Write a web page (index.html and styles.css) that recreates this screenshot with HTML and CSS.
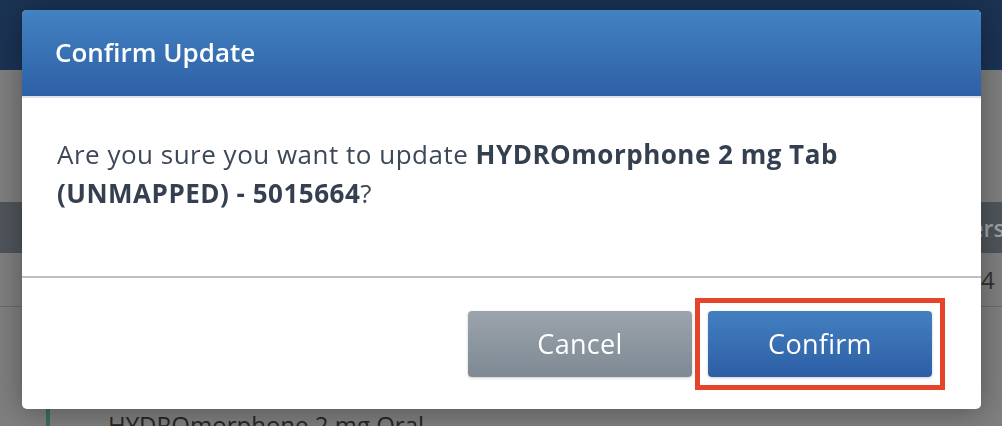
FILE: index.html
```html
<!DOCTYPE html>
<html lang="en">
<head>
<meta charset="utf-8">
<title>Confirm Update</title>
<link rel="stylesheet" href="styles.css">
</head>
<body>
<div class="page">
  <div class="topbar"></div>
  <div class="content">
    <div class="table">
      <div class="thead"><span class="th">Orders</span></div>
      <div class="trow"><span class="td">4</span></div>
    </div>
    <div class="item"><span class="item-bar"></span><span class="item-name">HYDROmorphone 2 mg Oral</span></div>
  </div>
</div>
<div class="overlay">
  <div class="modal">
    <div class="modal-header"><h1 class="modal-title">Confirm Update</h1></div>
    <div class="modal-body">
      <p class="message">Are you sure you want to update <b>HYDROmorphone 2 mg Tab</b><br><b>(UNMAPPED) - 5015664</b>?</p>
    </div>
    <div class="modal-footer">
      <button class="btn btn-cancel" type="button">Cancel</button>
      <div class="highlight"><button class="btn btn-confirm" type="button">Confirm</button></div>
    </div>
  </div>
</div>
</body>
</html>
```
FILE: styles.css
```css
html, body {
  margin: 0;
  padding: 0;
}
body {
  width: 1002px;
  height: 426px;
  overflow: hidden;
  background: #7f7f7f;
  font-family: "Open Sans", Lato, "Liberation Sans", sans-serif;
}
.page {
  display: flex;
  flex-direction: column;
  height: 426px;
}
.topbar {
  height: 70px;
  background: #1b3354;
  flex: none;
}
.content {
  flex: 1;
  display: flex;
  flex-direction: column;
}
.table {
  margin-top: 132px;
  display: flex;
  flex-direction: column;
}
.thead {
  height: 51px;
  background: #4f555b;
  display: flex;
  align-items: center;
  padding-left: 928px;
}
.th {
  font-size: 23px;
  font-weight: 600;
  color: #9ea2a6;
  white-space: nowrap;
}
.trow {
  height: 53px;
  border-bottom: 1px solid #6a6a6a;
  display: flex;
  align-items: center;
  padding-left: 981px;
}
.td {
  font-size: 24px;
  color: #333;
}
.item {
  margin-top: 101px;
  display: flex;
  align-items: flex-start;
  padding-left: 46px;
}
.item-bar {
  width: 4px;
  height: 40px;
  margin-top: -1px;
  background: #3c6e57;
}
.item-name {
  margin-left: 58px;
  font-size: 24px;
  line-height: 33px;
  color: #262626;
  white-space: nowrap;
}
.overlay {
  position: fixed;
  inset: 0;
}
.modal {
  position: absolute;
  left: 22px;
  top: 10px;
  width: 959px;
  height: 399px;
  background: #fff;
  border-radius: 5px;
  box-shadow: 0 2px 30px rgba(0, 0, 0, 0.35);
  display: flex;
  flex-direction: column;
  overflow: hidden;
}
.modal-header {
  height: 88px;
  box-sizing: border-box;
  flex: none;
  background: linear-gradient(#4282c2, #2e60a6);
  border-bottom: 2px solid #dde2ea;
  display: flex;
  align-items: center;
  padding: 0 0 3px 33px;
}
.modal-title {
  margin: 0;
  font-size: 26px;
  font-weight: 600;
  color: #fff;
}
.modal-body {
  flex: 1;
  padding: 37px 35px 0 35px;
}
.message {
  margin: 0;
  font-size: 26px;
  line-height: 39px;
  letter-spacing: 0.5px;
  color: #3c4858;
}
.message b {
  font-weight: 700;
  color: #34404f;
}
.modal-footer {
  height: 131px;
  flex: none;
  border-top: 2px solid #c0c0c0;
  display: flex;
  justify-content: flex-end;
  align-items: center;
  gap: 3px;
  padding-right: 36px;
}
.highlight {
  display: flex;
  border: 5px solid #e5432a;
  padding: 8px;
}
.btn {
  width: 224px;
  height: 66px;
  border: none;
  border-radius: 4px;
  font-family: inherit;
  font-size: 27px;
  letter-spacing: 0.3px;
  color: #fff;
  box-shadow: 0 1px 3px rgba(0, 0, 0, 0.2);
}
.btn-cancel {
  background: linear-gradient(#9ba4ad, #7e8993);
}
.btn-confirm {
  background: linear-gradient(#4380c0, #2d5ea5);
}
```
